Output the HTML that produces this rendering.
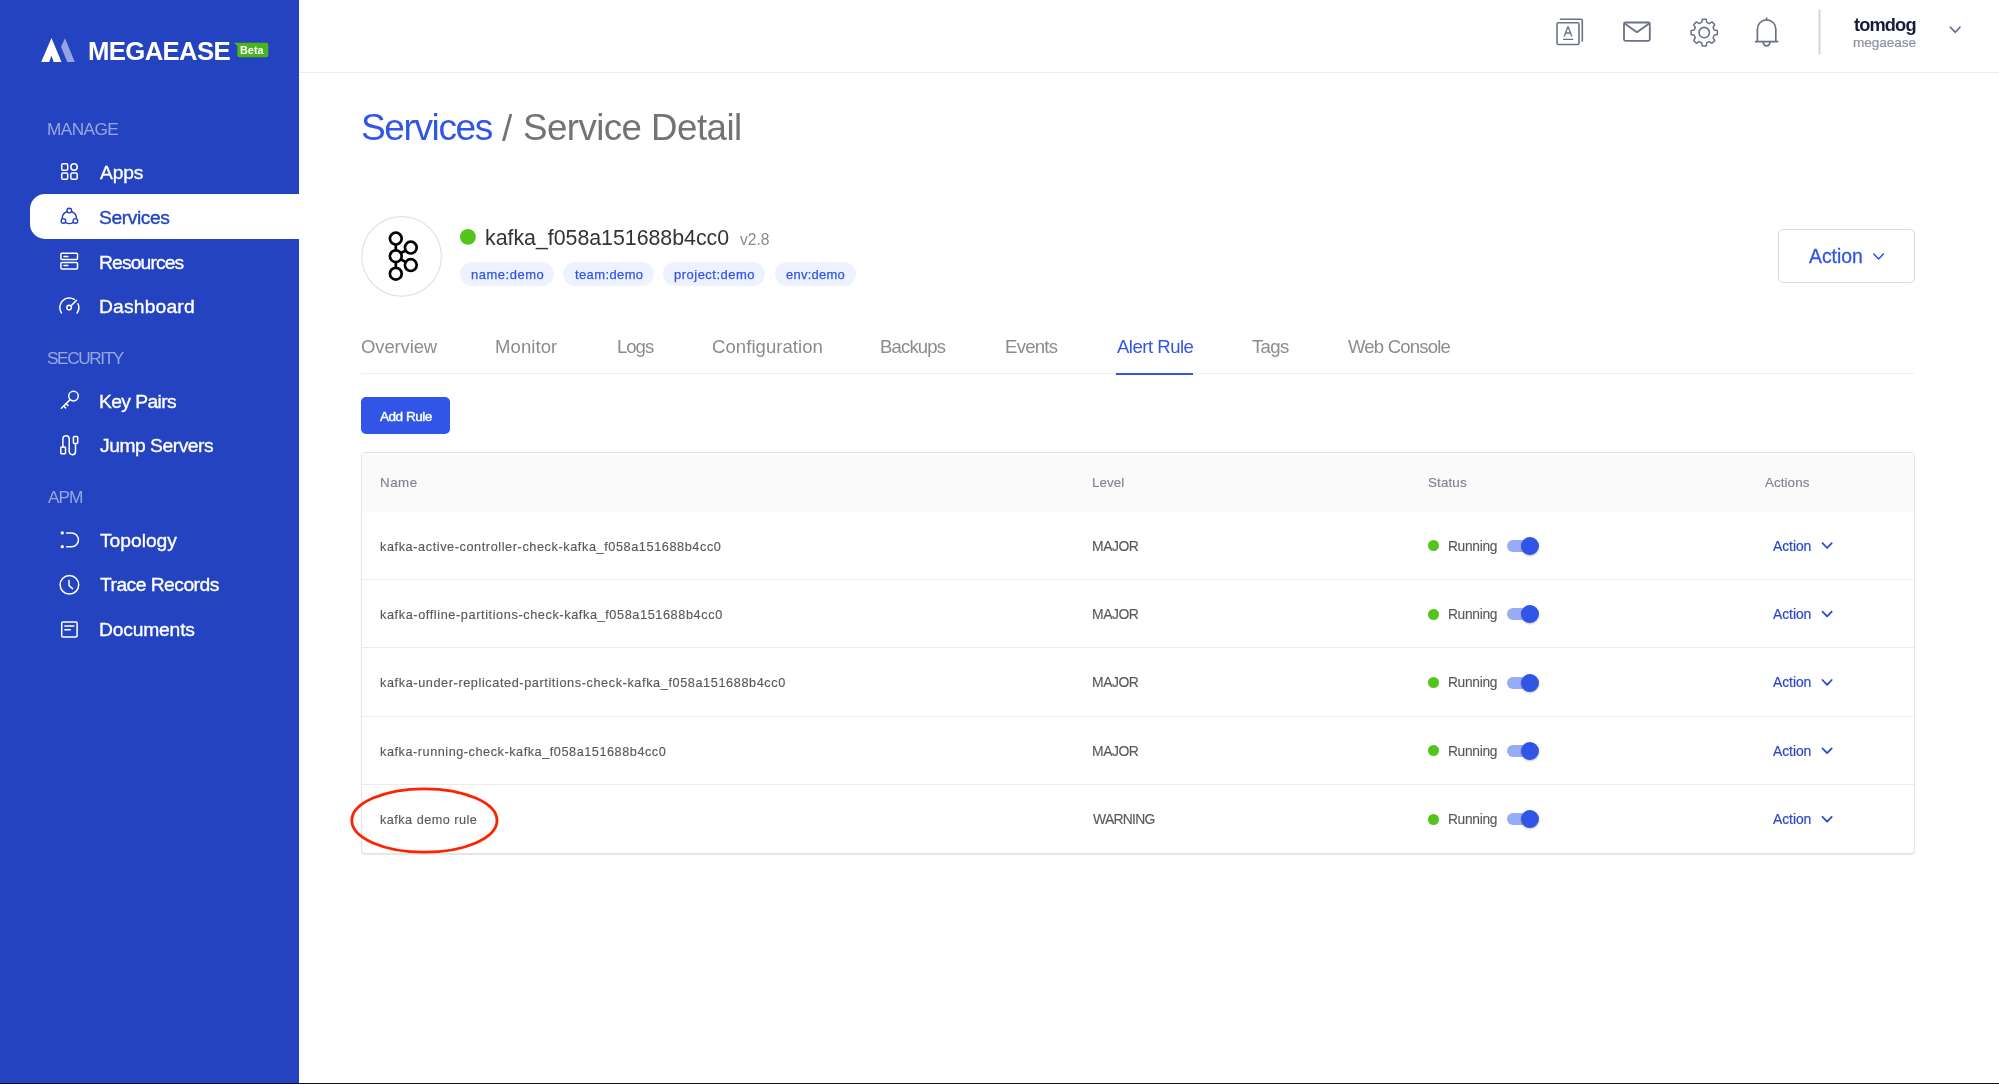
<!DOCTYPE html>
<html><head><meta charset="utf-8">
<style>
html,body{margin:0;padding:0;width:1999px;height:1084px;overflow:hidden;background:#fff;}
body{position:relative;font-family:"Liberation Sans",sans-serif;}
.t{position:absolute;white-space:nowrap;line-height:1;will-change:transform;font-family:"Liberation Sans",sans-serif;}
.a{position:absolute;}
#sb{position:absolute;left:0;top:0;width:299px;height:1084px;background:#2443C0;}
#pill{position:absolute;left:30px;top:194px;width:269px;height:45px;background:#fff;border-radius:15px 0 0 15px;}
#hdrline{position:absolute;left:299px;top:72px;width:1700px;height:1px;background:#E8ECF2;}
.tag{position:absolute;top:262px;height:24px;border-radius:12px;background:#EEF2FE;}
#actbtn{position:absolute;left:1778px;top:229px;width:135px;height:52px;border:1px solid #DCDCDC;border-radius:5px;background:#fff;}
#tabline{position:absolute;left:361px;top:373px;width:1554px;height:1px;background:#F0F0F0;}
#tabul{position:absolute;left:1116px;top:373px;width:77px;height:2px;background:#3155E6;}
#addbtn{position:absolute;left:361px;top:397px;width:89px;height:37px;border-radius:5px;background:#3155E6;}
#table{position:absolute;left:361px;top:452px;width:1552px;height:400px;border:1px solid #E4E4E4;border-radius:4px;background:#fff;box-shadow:0 1px 1px rgba(0,0,0,0.10);overflow:hidden;}
#thead{position:absolute;left:0;top:0;width:100%;height:59px;background:#FAFAFA;}
.rowline{position:absolute;left:0;width:100%;height:1px;background:#EBEBEB;}
.dot{position:absolute;width:11px;height:11px;border-radius:50%;background:#52C41A;}
.trk{position:absolute;width:31px;height:12px;border-radius:6px;background:#97ACF5;}
.knob{position:absolute;width:18px;height:18px;border-radius:50%;background:#3155E6;box-shadow:0 1px 2px rgba(0,0,0,0.25);}
#bottom{position:absolute;left:0;top:1083px;width:1999px;height:1px;background:#111;}
</style></head>
<body>
<div id="sb"></div>
<div id="pill"></div>
<div id="hdrline"></div>

<!-- logo -->
<svg class="a" style="left:0;top:0" width="300" height="80" viewBox="0 0 300 80">
  <polygon points="51.5,38 61.5,62 53.6,62 51.5,55.5 49.2,62 41.2,62" fill="#fff"/>
  <polygon points="65,38.3 74.8,62 67.3,62 61,46.8" fill="#94A4E2"/>
  <path d="M234,42.8 L266,42.8 Q268.3,42.8 268.3,45 L268.3,55 Q268.3,57.3 266,57.3 L239.5,57.3 Q237.3,57.3 237.3,55 L237.3,46 Z" fill="#4CB51D"/>
</svg>

<!-- sidebar icons -->
<svg class="a" style="left:0;top:0" width="300" height="700" viewBox="0 0 300 700" fill="none" stroke="#fff" stroke-width="1.5" stroke-linecap="round" stroke-linejoin="round">
  <!-- apps -->
  <rect x="61.7" y="163.8" width="6" height="6.4" rx="1.3"/>
  <circle cx="74.05" cy="167" r="3.2"/>
  <rect x="61.7" y="173.1" width="6" height="6.2" rx="1.3"/>
  <rect x="70.9" y="173.1" width="6.3" height="6.2" rx="1.3"/>
  <!-- services (active, blue) -->
  <g stroke="#2443C0" stroke-width="1.4">
    <circle cx="69.3" cy="210.6" r="2.3"/>
    <circle cx="63.4" cy="220.9" r="2.3"/>
    <circle cx="75.4" cy="220.9" r="2.3"/>
    <path d="M67.2,211.5 A7.6,7.6 0 0 0 62.2,218.4"/>
    <path d="M71.4,211.5 A7.6,7.6 0 0 1 76.5,218.4"/>
    <path d="M65.6,222.6 A7.6,7.6 0 0 0 73.1,222.6"/>
  </g>
  <!-- resources -->
  <rect x="60.9" y="253.3" width="16.6" height="6.2" rx="1"/>
  <rect x="60.9" y="262.4" width="16.6" height="6.5" rx="1"/>
  <line x1="64" y1="256.4" x2="67.8" y2="256.4"/>
  <line x1="64" y1="265.6" x2="67.8" y2="265.6"/>
  <!-- dashboard -->
  <path d="M61.52,312.95 A9.5,9.5 0 0 1 74.33,299.44"/>
  <path d="M78.04,303.79 A9.5,9.5 0 0 1 77.08,312.95"/>
  <circle cx="69.1" cy="307.6" r="2.3"/>
  <line x1="70.8" y1="306" x2="76.5" y2="300.4"/>
  <!-- key -->
  <circle cx="73.5" cy="396.1" r="4.8"/>
  <line x1="70.1" y1="399.6" x2="61.4" y2="408.2"/>
  <line x1="63.7" y1="406" x2="65.6" y2="407.9"/>
  <line x1="66.1" y1="403.6" x2="68" y2="405.5"/>
  <!-- jump servers -->
  <rect x="60.8" y="447" width="4.7" height="6.8" rx="0.8"/>
  <rect x="73.4" y="436.6" width="4.3" height="6.8" rx="0.8"/>
  <path d="M62.9,447 L62.9,439 A3.15,3.15 0 0 1 69.2,439 L69.2,451.6 A3.15,3.15 0 0 0 75.5,451.6 L75.5,443.4"/>
  <!-- topology -->
  <circle cx="62.3" cy="532.9" r="0.9" fill="#fff"/>
  <circle cx="62.3" cy="546.7" r="0.9" fill="#fff"/>
  <path d="M66.6,532.9 L71.6,532.9 A6.9,6.9 0 0 1 71.6,546.7 L66.6,546.7"/>
  <!-- trace -->
  <circle cx="69.4" cy="584.8" r="9.3"/>
  <path d="M69,580.4 L69,585.6 L72.6,588.6"/>
  <!-- documents -->
  <rect x="61.7" y="621.9" width="15.4" height="15" rx="1.2"/>
  <line x1="64.8" y1="625.9" x2="73.8" y2="625.9"/>
  <line x1="64.8" y1="629.7" x2="70.4" y2="629.7"/>
</svg>

<!-- header icons -->
<svg class="a" style="left:1540px;top:0" width="459" height="72" viewBox="1540 0 459 72" fill="none" stroke="#6B7186" stroke-width="1.6" stroke-linecap="round" stroke-linejoin="round">
  <!-- translate -->
  <rect x="1557" y="22.7" width="22" height="21.8" rx="1.5"/>
  <path d="M1560.6,19.2 L1581,19.2 Q1582.3,19.2 1582.3,20.5 L1582.3,41"/>
  <path d="M1564.3,36 L1568,26.6 L1571.7,36 M1565.5,33 L1570.5,33" stroke-width="1.3"/>
  <line x1="1563.4" y1="39.3" x2="1572.8" y2="39.3" stroke-width="1.3"/>
  <!-- mail -->
  <rect x="1624" y="22.5" width="25.8" height="18.3" rx="1.5" stroke-width="1.8"/>
  <path d="M1624.6,23.5 L1636.9,32.2 L1649.2,23.5" stroke-width="1.8"/>
  <!-- gear -->
  <path d="M1702.2,19.3 L1706.2,19.3 L1706.8,22.4 L1709.3,23.6 L1712,21.9 L1714.8,24.7 L1713.1,27.4 L1714.2,30 L1717.3,30.6 L1717.3,34.6 L1714.2,35.2 L1713.1,37.8 L1714.8,40.5 L1712,43.3 L1709.3,41.6 L1706.8,42.8 L1706.2,45.9 L1702.2,45.9 L1701.6,42.8 L1699.1,41.6 L1696.4,43.3 L1693.6,40.5 L1695.3,37.8 L1694.2,35.2 L1691.1,34.6 L1691.1,30.6 L1694.2,30 L1695.3,27.4 L1693.6,24.7 L1696.4,21.9 L1699.1,23.6 L1701.6,22.4 Z" stroke-width="1.5"/>
  <circle cx="1704.2" cy="32.6" r="5.2" stroke-width="1.6"/>
  <!-- bell -->
  <path d="M1766.6,18.2 L1766.6,19.6 M1757.4,41.2 L1757.4,29 A9.2,9.2 0 0 1 1775.8,29 L1775.8,41.2 M1755.6,41.6 L1777.6,41.6 M1763.3,42.6 A3.3,3.3 0 0 0 1769.9,42.6" stroke-width="1.7"/>
  <!-- divider -->
  <line x1="1819.5" y1="10.5" x2="1819.5" y2="53.5" stroke="#D3D6DE" stroke-width="2"/>
  <!-- chevron -->
  <path d="M1950.4,27.2 L1955.2,32.3 L1960,27.2" stroke="#5E6480" stroke-width="1.6"/>
</svg>

<!-- avatar -->
<svg class="a" style="left:355px;top:205px" width="125" height="100" viewBox="355 205 125 100">
  <circle cx="401.6" cy="256.4" r="39.8" fill="#fff" stroke="#E3E3E3" stroke-width="1.2"/>
  <g fill="none" stroke="#000" stroke-width="2.7">
    <line x1="395.8" y1="244.5" x2="395.8" y2="250.3"/>
    <line x1="395.8" y1="262.2" x2="395.8" y2="267.8"/>
    <line x1="400.6" y1="253.3" x2="405.5" y2="250.6"/>
    <line x1="400.6" y1="259.2" x2="405.5" y2="262"/>
    <circle cx="395.8" cy="238.6" r="5.9"/>
    <circle cx="395.8" cy="256.2" r="5.9"/>
    <circle cx="395.8" cy="273.7" r="5.9"/>
    <circle cx="410.8" cy="247.6" r="5.9"/>
    <circle cx="410.8" cy="265.1" r="5.9"/>
  </g>
  <circle cx="467.9" cy="236.9" r="7.9" fill="#52C41A"/>
</svg>

<div class="tag" style="left:460px;width:94px;"></div>
<div class="tag" style="left:563px;width:91px;"></div>
<div class="tag" style="left:663px;width:102px;"></div>
<div class="tag" style="left:775px;width:81px;"></div>

<div id="actbtn"></div>
<svg class="a" style="left:1860px;top:240px" width="40" height="30" viewBox="1860 240 40 30" fill="none" stroke="#3155E6" stroke-width="1.6" stroke-linecap="round" stroke-linejoin="round">
  <path d="M1873.8,254 L1878.6,259 L1883.4,254"/>
</svg>

<div id="tabline"></div>
<div id="tabul"></div>
<div id="addbtn"></div>

<div id="table">
  <div id="thead"></div>
  <div class="rowline" style="top:126px"></div>
  <div class="rowline" style="top:194px"></div>
  <div class="rowline" style="top:263px"></div>
  <div class="rowline" style="top:331px"></div>
</div>

<!-- status dots / toggles / chevrons -->
<div class="dot" style="left:1428.4px;top:540.1px"></div>
<div class="dot" style="left:1428.4px;top:608.5px"></div>
<div class="dot" style="left:1428.4px;top:676.9px"></div>
<div class="dot" style="left:1428.4px;top:745.3px"></div>
<div class="dot" style="left:1428.4px;top:813.7px"></div>

<div class="trk" style="left:1507px;top:539.7px"></div>
<div class="trk" style="left:1507px;top:608.1px"></div>
<div class="trk" style="left:1507px;top:676.5px"></div>
<div class="trk" style="left:1507px;top:744.9px"></div>
<div class="trk" style="left:1507px;top:813.3px"></div>
<div class="knob" style="left:1521px;top:536.8px"></div>
<div class="knob" style="left:1521px;top:605.2px"></div>
<div class="knob" style="left:1521px;top:673.6px"></div>
<div class="knob" style="left:1521px;top:742px"></div>
<div class="knob" style="left:1521px;top:810.4px"></div>

<svg class="a" style="left:1815px;top:530px" width="25" height="300" viewBox="1815 530 25 300" fill="none" stroke="#2D4BCC" stroke-width="1.8" stroke-linecap="round" stroke-linejoin="round">
  <path d="M1822.5,543.2 L1827.1,548 L1831.7,543.2"/>
  <path d="M1822.5,611.6 L1827.1,616.4 L1831.7,611.6"/>
  <path d="M1822.5,680 L1827.1,684.8 L1831.7,680"/>
  <path d="M1822.5,748.4 L1827.1,753.2 L1831.7,748.4"/>
  <path d="M1822.5,816.8 L1827.1,821.6 L1831.7,816.8"/>
</svg>

<div class='t' style='left:87.75px;top:39px;font-size:25.72px;font-weight:700;color:#fff;letter-spacing:-0.643px;'>MEGAEASE</div>
<div class='t' style='left:240px;top:45px;font-size:10.87px;font-weight:700;color:#fff;letter-spacing:0.0px;'>Beta</div>
<div class='t' style='left:46.7px;top:121px;font-size:17.25px;font-weight:400;color:rgba(255,255,255,0.52);letter-spacing:-0.6px;'>MANAGE</div>
<div class='t' style='left:46.7px;top:350px;font-size:17.25px;font-weight:400;color:rgba(255,255,255,0.52);letter-spacing:-1.414px;'>SECURITY</div>
<div class='t' style='left:47.7px;top:489px;font-size:17.25px;font-weight:400;color:rgba(255,255,255,0.52);letter-spacing:-1.0px;'>APM</div>
<div class='t' style='left:100.3px;top:163px;font-size:19.28px;font-weight:400;color:#fff;letter-spacing:-0.167px;-webkit-text-stroke:0.35px #fff;'>Apps</div>
<div class='t' style='left:99.3px;top:253px;font-size:19.28px;font-weight:400;color:#fff;letter-spacing:-0.862px;-webkit-text-stroke:0.35px #fff;'>Resources</div>
<div class='t' style='left:99.3px;top:297px;font-size:19.28px;font-weight:400;color:#fff;letter-spacing:0.175px;-webkit-text-stroke:0.35px #fff;'>Dashboard</div>
<div class='t' style='left:99.3px;top:392px;font-size:19.28px;font-weight:400;color:#fff;letter-spacing:-0.6px;-webkit-text-stroke:0.35px #fff;'>Key Pairs</div>
<div class='t' style='left:100.3px;top:436px;font-size:19.28px;font-weight:400;color:#fff;letter-spacing:-0.473px;-webkit-text-stroke:0.35px #fff;'>Jump Servers</div>
<div class='t' style='left:100.3px;top:531px;font-size:19.28px;font-weight:400;color:#fff;letter-spacing:-0.029px;-webkit-text-stroke:0.35px #fff;'>Topology</div>
<div class='t' style='left:100.3px;top:575px;font-size:19.28px;font-weight:400;color:#fff;letter-spacing:-0.525px;-webkit-text-stroke:0.35px #fff;'>Trace Records</div>
<div class='t' style='left:99.3px;top:620px;font-size:19.28px;font-weight:400;color:#fff;letter-spacing:-0.187px;-webkit-text-stroke:0.35px #fff;'>Documents</div>
<div class='t' style='left:99.0px;top:208px;font-size:19.28px;font-weight:400;color:#2443C0;letter-spacing:-0.429px;-webkit-text-stroke:0.35px #2443C0;'>Services</div>
<div class='t' style='left:1854px;top:16px;font-size:18.24px;font-weight:700;color:#161B3D;letter-spacing:-0.86px;'>tomdog</div>
<div class='t' style='left:1853px;top:36px;font-size:13.58px;font-weight:400;color:#8C91A7;letter-spacing:-0.043px;-webkit-text-stroke:0.2px #8C91A7;'>megaease</div>
<div class='t' style='left:360.5px;top:109px;font-size:37.1px;font-weight:400;color:#3155E6;letter-spacing:-1.414px;'>Services</div>
<div class='t' style='left:502px;top:110px;font-size:37.1px;font-weight:400;color:#737373;letter-spacing:0px;'>/</div>
<div class='t' style='left:523px;top:110px;font-size:36.67px;font-weight:400;color:#737373;letter-spacing:-0.538px;'>Service Detail</div>
<div class='t' style='left:484.5px;top:228px;font-size:21.35px;font-weight:400;color:#333333;letter-spacing:-0.019px;'>kafka_f058a151688b4cc0</div>
<div class='t' style='left:739.7px;top:232px;font-size:15.65px;font-weight:400;color:#8C8C8C;letter-spacing:-0.033px;'>v2.8</div>
<div class='t' style='left:470.5px;top:269px;font-size:12.97px;font-weight:400;color:#3155E6;letter-spacing:0.537px;-webkit-text-stroke:0.25px #3155E6;'>name:demo</div>
<div class='t' style='left:574.6px;top:269px;font-size:12.97px;font-weight:400;color:#3155E6;letter-spacing:0.4px;-webkit-text-stroke:0.25px #3155E6;'>team:demo</div>
<div class='t' style='left:673.5px;top:269px;font-size:12.97px;font-weight:400;color:#3155E6;letter-spacing:0.5px;-webkit-text-stroke:0.25px #3155E6;'>project:demo</div>
<div class='t' style='left:786.1px;top:269px;font-size:12.97px;font-weight:400;color:#3155E6;letter-spacing:0.243px;-webkit-text-stroke:0.25px #3155E6;'>env:demo</div>
<div class='t' style='left:1809.2px;top:247px;font-size:19.42px;font-weight:400;color:#3155E6;letter-spacing:-0.04px;-webkit-text-stroke:0.3px #3155E6;'>Action</div>
<div class='t' style='left:360.8px;top:338px;font-size:18.55px;font-weight:400;color:#8C8C8C;letter-spacing:-0.143px;'>Overview</div>
<div class='t' style='left:495.4px;top:338px;font-size:18.55px;font-weight:400;color:#8C8C8C;letter-spacing:0.083px;'>Monitor</div>
<div class='t' style='left:617.0px;top:338px;font-size:18.55px;font-weight:400;color:#8C8C8C;letter-spacing:-1.0px;'>Logs</div>
<div class='t' style='left:712.0px;top:338px;font-size:18.55px;font-weight:400;color:#8C8C8C;letter-spacing:0.058px;'>Configuration</div>
<div class='t' style='left:880.0px;top:338px;font-size:18.55px;font-weight:400;color:#8C8C8C;letter-spacing:-0.833px;'>Backups</div>
<div class='t' style='left:1004.6px;top:338px;font-size:18.55px;font-weight:400;color:#8C8C8C;letter-spacing:-0.72px;'>Events</div>
<div class='t' style='left:1251.5px;top:338px;font-size:18.55px;font-weight:400;color:#8C8C8C;letter-spacing:-0.667px;'>Tags</div>
<div class='t' style='left:1347.5px;top:338px;font-size:18.55px;font-weight:400;color:#8C8C8C;letter-spacing:-0.8px;'>Web Console</div>
<div class='t' style='left:1116.5px;top:338px;font-size:18.55px;font-weight:400;color:#3155E6;letter-spacing:-0.5px;'>Alert Rule</div>
<div class='t' style='left:379.7px;top:410px;font-size:13.62px;font-weight:400;color:#fff;letter-spacing:-0.529px;-webkit-text-stroke:0.4px #fff;'>Add Rule</div>
<div class='t' style='left:379.8px;top:476px;font-size:13.33px;font-weight:400;color:#7E8299;letter-spacing:0.5px;-webkit-text-stroke:0.15px #7E8299;'>Name</div>
<div class='t' style='left:1091.9px;top:476px;font-size:13.33px;font-weight:400;color:#7E8299;letter-spacing:0.075px;-webkit-text-stroke:0.15px #7E8299;'>Level</div>
<div class='t' style='left:1427.7px;top:476px;font-size:13.33px;font-weight:400;color:#7E8299;letter-spacing:0.16px;-webkit-text-stroke:0.15px #7E8299;'>Status</div>
<div class='t' style='left:1764.6px;top:476px;font-size:13.33px;font-weight:400;color:#7E8299;letter-spacing:0.1px;-webkit-text-stroke:0.15px #7E8299;'>Actions</div>
<div class='t' style='left:379.8px;top:541px;font-size:12.7px;font-weight:400;color:#595959;letter-spacing:0.586px;-webkit-text-stroke:0.15px #595959;'>kafka-active-controller-check-kafka_f058a151688b4cc0</div>
<div class='t' style='left:1091.9px;top:540px;font-size:13.91px;font-weight:400;color:#595959;letter-spacing:-0.45px;-webkit-text-stroke:0.12px #595959;'>MAJOR</div>
<div class='t' style='left:1447.9px;top:540px;font-size:13.77px;font-weight:400;color:#595959;letter-spacing:-0.317px;-webkit-text-stroke:0.12px #595959;'>Running</div>
<div class='t' style='left:1773.3px;top:540px;font-size:13.91px;font-weight:400;color:#2B48C8;letter-spacing:-0.06px;-webkit-text-stroke:0.2px #2B48C8;'>Action</div>
<div class='t' style='left:379.8px;top:609px;font-size:12.7px;font-weight:400;color:#595959;letter-spacing:0.604px;-webkit-text-stroke:0.15px #595959;'>kafka-offline-partitions-check-kafka_f058a151688b4cc0</div>
<div class='t' style='left:1091.9px;top:608px;font-size:13.91px;font-weight:400;color:#595959;letter-spacing:-0.45px;-webkit-text-stroke:0.12px #595959;'>MAJOR</div>
<div class='t' style='left:1447.9px;top:608px;font-size:13.77px;font-weight:400;color:#595959;letter-spacing:-0.317px;-webkit-text-stroke:0.12px #595959;'>Running</div>
<div class='t' style='left:1773.3px;top:608px;font-size:13.91px;font-weight:400;color:#2B48C8;letter-spacing:-0.06px;-webkit-text-stroke:0.2px #2B48C8;'>Action</div>
<div class='t' style='left:379.8px;top:677px;font-size:12.7px;font-weight:400;color:#595959;letter-spacing:0.597px;-webkit-text-stroke:0.15px #595959;'>kafka-under-replicated-partitions-check-kafka_f058a151688b4cc0</div>
<div class='t' style='left:1091.9px;top:676px;font-size:13.91px;font-weight:400;color:#595959;letter-spacing:-0.45px;-webkit-text-stroke:0.12px #595959;'>MAJOR</div>
<div class='t' style='left:1447.9px;top:676px;font-size:13.77px;font-weight:400;color:#595959;letter-spacing:-0.317px;-webkit-text-stroke:0.12px #595959;'>Running</div>
<div class='t' style='left:1773.3px;top:676px;font-size:13.91px;font-weight:400;color:#2B48C8;letter-spacing:-0.06px;-webkit-text-stroke:0.2px #2B48C8;'>Action</div>
<div class='t' style='left:379.8px;top:746px;font-size:12.7px;font-weight:400;color:#595959;letter-spacing:0.537px;-webkit-text-stroke:0.15px #595959;'>kafka-running-check-kafka_f058a151688b4cc0</div>
<div class='t' style='left:1091.9px;top:745px;font-size:13.91px;font-weight:400;color:#595959;letter-spacing:-0.45px;-webkit-text-stroke:0.12px #595959;'>MAJOR</div>
<div class='t' style='left:1447.9px;top:745px;font-size:13.77px;font-weight:400;color:#595959;letter-spacing:-0.317px;-webkit-text-stroke:0.12px #595959;'>Running</div>
<div class='t' style='left:1773.3px;top:745px;font-size:13.91px;font-weight:400;color:#2B48C8;letter-spacing:-0.06px;-webkit-text-stroke:0.2px #2B48C8;'>Action</div>
<div class='t' style='left:379.8px;top:814px;font-size:12.7px;font-weight:400;color:#595959;letter-spacing:0.464px;-webkit-text-stroke:0.15px #595959;'>kafka demo rule</div>
<div class='t' style='left:1092.9px;top:813px;font-size:13.91px;font-weight:400;color:#595959;letter-spacing:-0.733px;-webkit-text-stroke:0.12px #595959;'>WARNING</div>
<div class='t' style='left:1447.9px;top:813px;font-size:13.77px;font-weight:400;color:#595959;letter-spacing:-0.317px;-webkit-text-stroke:0.12px #595959;'>Running</div>
<div class='t' style='left:1773.3px;top:813px;font-size:13.91px;font-weight:400;color:#2B48C8;letter-spacing:-0.06px;-webkit-text-stroke:0.2px #2B48C8;'>Action</div>

<!-- red annotation ellipse -->
<svg class="a" style="left:340px;top:775px" width="180" height="90" viewBox="340 775 180 90">
  <ellipse cx="424.4" cy="820.5" rx="72.6" ry="31.7" fill="none" stroke="#FF2200" stroke-width="2.8"/>
</svg>

<div id="bottom"></div>
</body></html>
